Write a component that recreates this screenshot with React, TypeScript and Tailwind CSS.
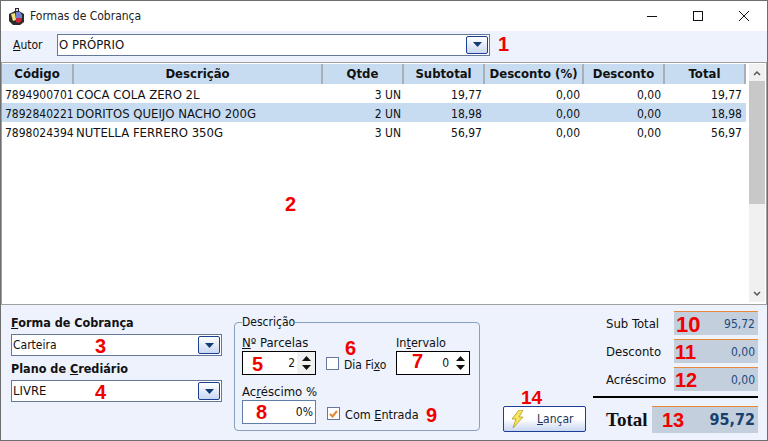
import React from 'react';

const font = { fontFamily: '"DejaVu Sans Condensed", "DejaVu Sans", sans-serif' };

const columns = 'grid grid-cols-[72px_249px_81px_81px_99px_81px_81px]';

const rows = [
  { code: '7894900701', desc: 'COCA COLA ZERO 2L', qty: '3', sub: '19,77', total: '19,77' },
  { code: '7892840221', desc: 'DORITOS QUEIJO NACHO 200G', qty: '2', sub: '18,98', total: '18,98', selected: true },
  { code: '7898024394', desc: 'NUTELLA FERRERO 350G', qty: '3', sub: '56,97', total: '56,97' },
];

const Mark: React.FC<{ className: string; children: React.ReactNode }> = ({ className, children }) => (
  <span className={`absolute font-['Liberation_Sans'] font-bold text-[#f00000] leading-none ${className}`}>{children}</span>
);

const DropButton = () => (
  <div className="w-[22px] h-[18px] border border-[#1c3f94] rounded-[2px] bg-gradient-to-b from-white to-[#c9d7f2] flex items-center justify-center">
    <svg width="9" height="5" viewBox="0 0 9 5"><path d="M0 0h9L4.500 5z" fill="#123a74" /></svg>
  </div>
);

const Combo: React.FC<{ value: string; width: string; textClass?: string; children?: React.ReactNode }> = ({ value, width, textClass = 'text-[12px]', children }) => (
  <div className={`relative ${width} h-[22px] border border-[#66789a] bg-white flex items-center justify-between pl-[1px] pr-[1px]`}>
    <span className={`${textClass} text-[#111]`}>{value}</span>
    <DropButton />
    {children}
  </div>
);

const Spin: React.FC<{ value: string; shaded?: boolean; children?: React.ReactNode }> = ({ value, shaded, children }) => (
  <div className="relative w-[74px] h-[24px] border border-black bg-white flex items-center justify-end">
    <span className="text-[12px] text-[#111] pr-[2px]">{value}</span>
    <div className={`w-[18px] h-[22px] flex flex-col items-center justify-center gap-[4px] ${shaded ? 'bg-[#f0f0f0]' : ''}`}>
      <svg width="9" height="5" viewBox="0 0 9 5"><path d="M0 5L4.500 0L9 5z" fill="#111" /></svg>
      <svg width="9" height="5" viewBox="0 0 9 5"><path d="M0 0h9L4.500 5z" fill="#111" /></svg>
    </div>
    {children}
  </div>
);

const Total: React.FC<{ label: string; value: string; mark: string; markClass: string }> = ({ label, value, mark, markClass }) => (
  <div className="flex items-center">
    <span className="w-[68px] pt-[1px] text-[13px] text-[#111] whitespace-nowrap">{label}</span>
    <div className="relative w-[84px] h-[24px] bg-[#c3cfdc] border-t border-[#e8883a] flex items-center justify-end pr-[3px]">
      <span className="text-[12px] text-[#1c4a80]">{value}</span>
      <Mark className={markClass}>{mark}</Mark>
    </div>
  </div>
);

export default function App() {
  return (
    <div style={font} className="relative w-[768px] h-[441px] border border-[#6e6e6e] bg-[#edf2fc] flex flex-col overflow-hidden">
      {/* title bar */}
      <div className="h-[30px] bg-white flex items-center pl-[8px] shrink-0">
        <svg width="16" height="17" viewBox="0 0 16 17" className="mt-[1px]">
          <path d="M6 0h4v3l5 3v8l-4 3H4l-4-4V6l6-3z" fill="#2a2a2a" />
          <path d="M2 6l4-1 1 7-3 1z" fill="#f2e27a" />
          <path d="M7 4h4l2 3v3H7z" fill="#6f7fd0" />
          <path d="M7 10h6l-1 4-3 1-2-1z" fill="#c9283a" />
          <rect x="7" y="1" width="2" height="2" fill="#d8d8d8" />
        </svg>
        <span className="ml-[5px] text-[12px] text-[#222]">Formas de Cobrança</span>
        <div className="ml-auto flex items-center">
          <div className="w-[46px] flex justify-center"><svg width="10" height="10" viewBox="0 0 10 10"><path d="M0 5.500h10" stroke="#111" /></svg></div>
          <div className="w-[46px] flex justify-center"><svg width="10" height="10" viewBox="0 0 10 10"><rect x=".5" y=".5" width="9" height="9" fill="none" stroke="#111" /></svg></div>
          <div className="w-[46px] flex justify-center"><svg width="10" height="10" viewBox="0 0 10 10"><path d="M0 0l10 10M10 0L0 10" stroke="#111" /></svg></div>
        </div>
      </div>

      {/* autor */}
      <div className="h-[31px] flex items-center pl-[12px] pb-[4px] shrink-0">
        <span className="w-[44px] text-[12px] text-[#111]"><u>A</u>utor</span>
        <Combo value="O PRÓPRIO" width="w-[433px]" textClass="text-[13px]" />
        <span className="ml-[8px] -mt-[2px] font-['Liberation_Sans'] font-bold text-[20px] leading-none text-[#f00000]">1</span>
      </div>

      {/* grid */}
      <div className="relative h-[243px] border border-[#a0a0a0] bg-white flex shrink-0">
        <div className="w-[744px] pt-[1px]">
          <div className={`${columns} h-[20px] bg-[#c8dcf1] text-[13px] font-bold text-[#111] items-center text-center`}>
            {['Código', 'Descrição', 'Qtde', 'Subtotal', 'Desconto (%)', 'Desconto', 'Total'].map(h => (
              <div key={h} className="h-full flex items-center justify-center border-r-2 border-[#a9afb6] whitespace-nowrap">{h}</div>
            ))}
          </div>
          {rows.map(r => (
            <div key={r.code} className={`${columns} h-[19px] pt-[1px] items-center text-[12px] text-[#111] ${r.selected ? 'bg-[#c8dcf1]' : ''}`}>
              <div className="pl-[3px] whitespace-nowrap overflow-hidden">{r.code}</div>
              <div className="pl-[2px] text-[13px] whitespace-nowrap">{r.desc}</div>
              <div className="text-right pr-[3px]">{r.qty} UN</div>
              <div className="text-right pr-[3px]">{r.sub}</div>
              <div className="text-right pr-[4px]">0,00</div>
              <div className="text-right pr-[4px]">0,00</div>
              <div className="text-right pr-[4px]">{r.total}</div>
            </div>
          ))}
        </div>
        <div className="ml-auto w-[16px] mr-[1px] mt-[1px] mb-[2px] bg-[#f0f0f0] flex flex-col items-center">
          <div className="h-[17px] flex items-center">
            <svg width="8" height="6" viewBox="0 0 8 6"><path d="M1 5l3-3 3 3" fill="none" stroke="#555" strokeWidth="1.500" /></svg>
          </div>
          <div className="w-full h-[123px] bg-[#c8c8c8]" />
          <div className="mt-auto h-[17px] flex items-center">
            <svg width="8" height="6" viewBox="0 0 8 6"><path d="M1 1l3 3 3-3" fill="none" stroke="#555" strokeWidth="1.500" /></svg>
          </div>
        </div>
        <Mark className="left-[283px] top-[131px] text-[20px]">2</Mark>
      </div>

      {/* bottom */}
      <div className="flex-1 flex pl-[10px]">
        <div className="w-[212px] pt-[10px]">
          <div className="text-[12.500px] font-bold text-[#111] leading-[16px] mb-[3px]"><u>F</u>orma de Cobrança</div>
          <Combo value="Carteira" width="w-[211px]"><Mark className="left-[83px] top-[1px] text-[20px]">3</Mark></Combo>
          <div className="text-[12.500px] font-bold text-[#111] leading-[16px] mt-[5px] mb-[3px]">Plano de <u>C</u>rediário</div>
          <Combo value="LIVRE" width="w-[211px]" textClass="text-[13px]"><Mark className="left-[83px] top-[1px] text-[20px]">4</Mark></Combo>
        </div>

        <fieldset className="relative ml-[11px] mt-[10px] w-[246px] h-[116px] border border-[#8ba0bd] rounded-[4px] px-[7px]">
          <legend className="text-[12px] leading-[14px] text-[#111]">Descrição</legend>
          <div className="flex mt-[6px]">
            <div>
              <div className="text-[13px] leading-[16px] text-[#111] whitespace-nowrap"><u>N</u>º Parcelas</div>
              <Spin value="2" shaded><Mark className="left-[9px] top-[2px] text-[20px]">5</Mark></Spin>
            </div>
            <div className="relative w-[80px] pl-[10px] pt-[21px] flex items-start">
              <span className="w-[13px] h-[13px] border border-[#66789a] bg-white mt-[1px]" />
              <span className="ml-[5px] text-[12px] text-[#111] whitespace-nowrap">Dia Fi<u>x</u>o</span>
              <Mark className="left-[29px] top-[3px] text-[20px]">6</Mark>
            </div>
            <div>
              <div className="text-[12.500px] leading-[16px] text-[#111] whitespace-nowrap">In<u>t</u>ervalo</div>
              <Spin value="0"><Mark className="left-[15px] -top-[1px] text-[20px]">7</Mark></Spin>
            </div>
          </div>
          <div className="flex mt-[9px]">
            <div>
              <div className="text-[13px] leading-[16px] text-[#111] whitespace-nowrap">Ac<u>r</u>éscimo %</div>
              <div className="relative w-[74px] h-[24px] border border-[#5f7fa8] bg-white flex items-center justify-end pr-[2px]">
                <span className="text-[12px] text-[#111]">0%</span>
                <Mark className="left-[13px] top-[1px] text-[20px]">8</Mark>
              </div>
            </div>
            <div className="relative pl-[10px] pt-[22px] flex items-start">
              <span className="w-[13px] h-[13px] border border-[#66789a] bg-white mt-[1px] flex items-center justify-center">
                <svg width="9" height="8" viewBox="0 0 9 8"><path d="M1 4l2.500 2.500L8 1" fill="none" stroke="#e8862a" strokeWidth="2" /></svg>
              </span>
              <span className="ml-[5px] text-[12.500px] text-[#111] whitespace-nowrap">Com <u>E</u>ntrada</span>
              <Mark className="left-[109px] top-[21px] text-[20px]">9</Mark>
            </div>
          </div>
        </fieldset>

        <div className="relative w-[83px] ml-[23px] self-end mb-[8px]">
          <Mark className="left-[18px] -top-[18px] text-[19px]">14</Mark>
          <div className="h-[26px] border border-[#1c3f94] rounded-[2px] bg-gradient-to-b from-white via-white to-[#c9d7f2] flex items-center pl-[7px]">
            <svg width="14" height="18" viewBox="0 0 14 18"><path d="M8 0L1 9h4l-3 9 10-11H8l4-7z" fill="#f6e65a" stroke="#b49a20" strokeWidth=".8" /></svg>
            <span className="ml-[12px] text-[12px] text-[#1c3558]"><u>L</u>ançar</span>
          </div>
        </div>

        <div className="ml-[7px] w-[165px] pt-[6px] flex flex-col items-end">
          <div className="flex flex-col gap-[4px] pl-[13px] w-full">
            <Total label="Sub Total" value="95,72" mark="10" markClass="left-[2px] top-[2px] text-[22px]" />
            <Total label="Desconto" value="0,00" mark="11" markClass="left-[1px] top-[2px] text-[20px]" />
            <Total label="Acréscimo" value="0,00" mark="12" markClass="left-[1px] top-[2px] text-[20px]" />
          </div>
          <div className="w-[165px] h-[2px] bg-black mt-[5px]" />
          <div className="flex items-center mt-[7px] w-full">
            <span className="ml-[13px] w-[46px] pt-[1px] font-['Liberation_Serif'] text-[19px] font-bold text-[#111]">Total</span>
            <div className="relative w-[106px] h-[27px] bg-[#c3cfdc] border-t border-[#e8883a] flex items-center justify-end pr-[3px]">
              <span className="text-[16px] font-bold text-[#17406f]">95,72</span>
              <Mark className="left-[10px] top-[3px] text-[20px]">13</Mark>
            </div>
          </div>
        </div>
      </div>
    </div>
  );
}
